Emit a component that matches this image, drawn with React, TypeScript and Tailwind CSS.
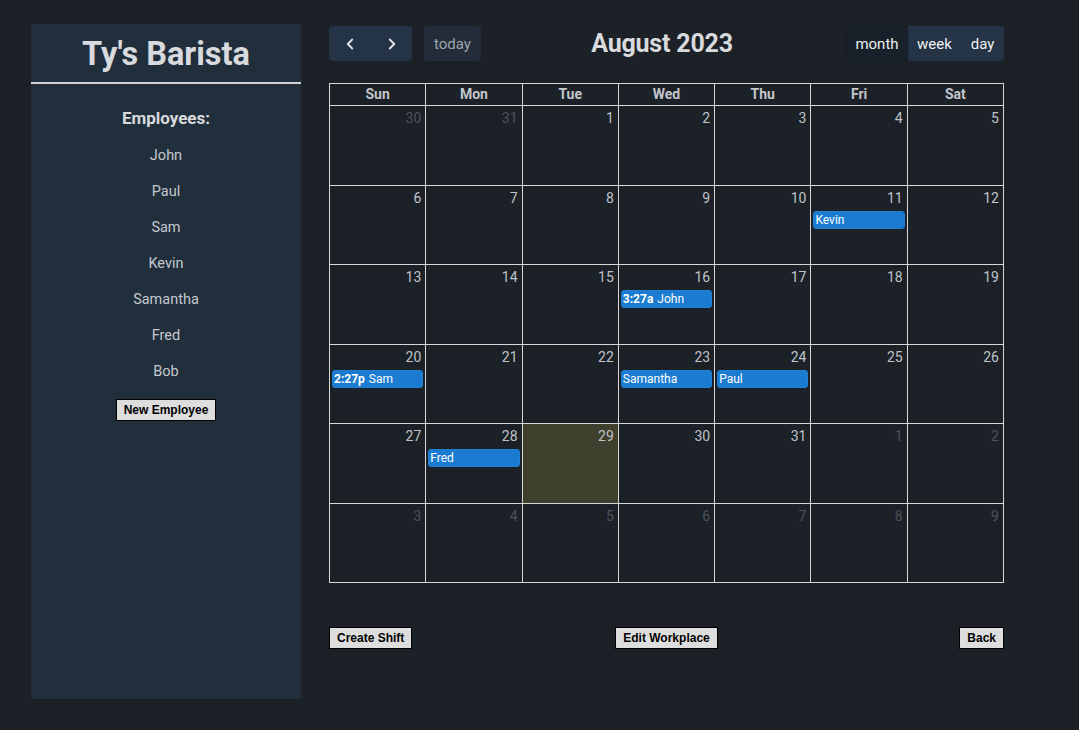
import { ChevronLeft, ChevronRight } from "lucide-react";

const employees = ["John", "Paul", "Sam", "Kevin", "Samantha", "Fred", "Bob"];

type Ev = { time?: string; name: string };

const events: Record<string, Ev> = {
  "8-11": { name: "Kevin" },
  "8-16": { time: "3:27a", name: "John" },
  "8-20": { time: "2:27p", name: "Sam" },
  "8-23": { name: "Samantha" },
  "8-24": { name: "Paul" },
  "8-28": { name: "Fred" },
};

const days = ["Sun", "Mon", "Tue", "Wed", "Thu", "Fri", "Sat"];

function buildCells() {
  const cells: { day: number; month: number }[] = [];
  cells.push({ day: 30, month: 7 }, { day: 31, month: 7 });
  for (let d = 1; d <= 31; d++) cells.push({ day: d, month: 8 });
  let d = 1;
  while (cells.length < 42) cells.push({ day: d++, month: 9 });
  return cells;
}

function LegacyButton({ children, className = "" }: { children: string; className?: string }) {
  return (
    <button
      className={`bg-[#dddddd] border border-black text-black text-[12px] font-bold leading-[14px] px-[7px] py-[3px] font-['Liberation_Sans',Arial,sans-serif] ${className}`}
    >
      {children}
    </button>
  );
}

export default function App() {
  const cells = buildCells();
  return (
    <div className="h-[730px] bg-[#1c2128] flex gap-[28px] pl-[31px] pr-[75px] pt-[24px] pb-[31px] font-['Roboto',sans-serif]">
      {/* Sidebar */}
      <aside className="w-[270px] bg-[#212f3d] rounded-[3px] flex flex-col items-center">
        <div className="w-full h-[60px] flex items-center justify-center border-b-2 border-[#d4d4d6]">
          <h1 className="text-[32.5px] font-bold text-[#d9dadd] pt-[3px]">Ty's Barista</h1>
        </div>
        <h2 className="mt-[22px] text-[17px] font-bold text-[#d9dadd]">Employees:</h2>
        <ul className="mt-[6px] flex flex-col items-center">
          {employees.map((e) => (
            <li key={e} className="h-[36px] leading-[36px] text-[14.5px] text-[#c4c8ce]">
              {e}
            </li>
          ))}
        </ul>
        <div className="mt-[7px]">
          <LegacyButton>New Employee</LegacyButton>
        </div>
      </aside>

      {/* Calendar */}
      <main className="w-[675px] pt-[2px] flex flex-col">
        <div className="grid grid-cols-[1fr_auto_1fr] items-center h-[35px] -mt-[1px]">
          <div className="flex items-center gap-[12px]">
            <div className="flex h-[35px] rounded-[4px] bg-[#243345] text-[#e3e6ea]">
              <button className="w-[42px] flex items-center justify-center">
                <ChevronLeft size={18} strokeWidth={2.4} />
              </button>
              <button className="w-[41px] flex items-center justify-center">
                <ChevronRight size={18} strokeWidth={2.4} />
              </button>
            </div>
            <button className="h-[35px] w-[57px] rounded-[4px] bg-[#232d39] text-[#9ea4ac] text-[15px]">
              today
            </button>
          </div>
          <h2 className="text-[25px] font-bold text-[#d9dadd] tracking-[-0.2px] pr-[9px]">August 2023</h2>
          <div className="justify-self-end flex h-[35px] rounded-[4px] overflow-hidden bg-[#243345] text-[#eef0f2] text-[15px]">
            <button className="w-[62px] bg-[#182029] border border-[#141b22] rounded-l-[4px]">month</button>
            <button className="w-[53px]">week</button>
            <button className="w-[43px]">day</button>
          </div>
        </div>

        <div className="mt-[23px] h-[500px] grid grid-cols-7 grid-rows-[22px_repeat(6,1fr)] border-l border-t border-[#d8d8d8]">
          {days.map((d) => (
            <div
              key={d}
              className="border-r border-b border-[#d8d8d8] flex items-center justify-center text-[14px] font-bold text-[#c2c6cc]"
            >
              {d}
            </div>
          ))}
          {cells.map((c, i) => {
            const ev = c.month === 8 ? events[`8-${c.day}`] : undefined;
            const today = c.month === 8 && c.day === 29;
            return (
              <div
                key={i}
                className={`border-r border-b border-[#d8d8d8] flex flex-col ${today ? "bg-[#3f3f2d]" : ""}`}
              >
                <div
                  className={`text-right pr-[4px] pt-[2px] text-[14px] leading-[20px] ${
                    c.month === 8 ? "text-[#bfc3c9]" : "text-[#4c5159]"
                  }`}
                >
                  {c.day}
                </div>
                {ev && (
                  <div className="mt-[3px] ml-[2px] mr-[2px] h-[18px] rounded-[3px] bg-[#1a7bd0] border border-[#1f80d6] text-white text-[12px] leading-[16px] px-[1px] whitespace-nowrap overflow-hidden">
                    {ev.time && <span className="font-bold mr-[4px]">{ev.time}</span>}
                    <span>{ev.name}</span>
                  </div>
                )}
              </div>
            );
          })}
        </div>

        <div className="mt-[44px] grid grid-cols-3 items-center">
          <LegacyButton className="justify-self-start">Create Shift</LegacyButton>
          <LegacyButton className="justify-self-center">Edit Workplace</LegacyButton>
          <LegacyButton className="justify-self-end">Back</LegacyButton>
        </div>
      </main>
    </div>
  );
}
